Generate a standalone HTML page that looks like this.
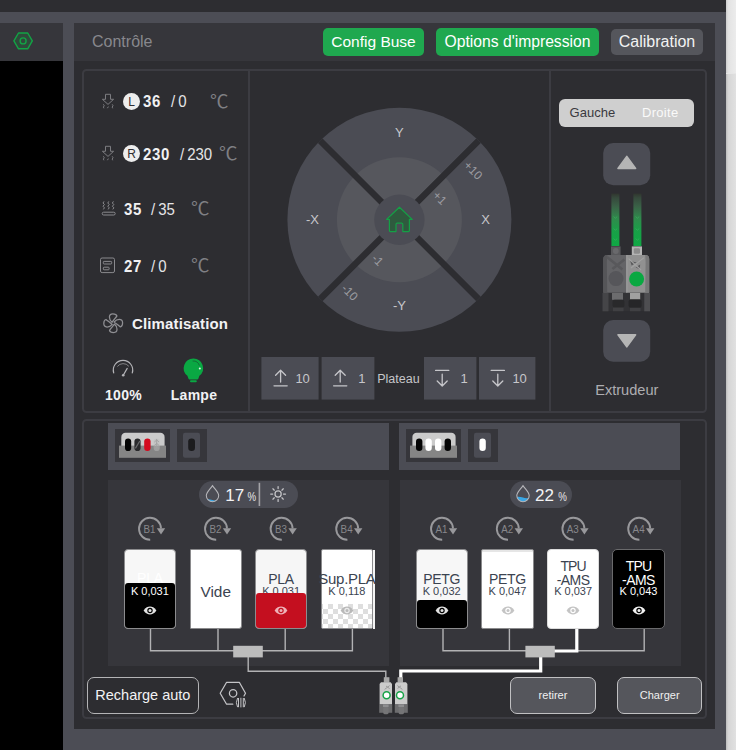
<!DOCTYPE html>
<html lang="fr">
<head>
<meta charset="utf-8">
<title>Contrôle</title>
<style>
*{box-sizing:border-box;margin:0;padding:0}
html,body{width:736px;height:750px;overflow:hidden}
body{background:#4c4d55;font-family:"Liberation Sans","Noto Sans CJK SC",sans-serif;position:relative;color:#e6e6e8}
.abs{position:absolute}
.t{position:absolute;white-space:nowrap;line-height:1}
.c{transform:translate(-50%,-50%)}
.cy{transform:translateY(-50%)}
#topbar{left:0;top:0;width:726px;height:12px;background:#2d2d31}
#rstrip{left:726px;top:0;width:10px;height:750px;background:linear-gradient(90deg,#cdcdcd 0,#e3e3e3 22%,#ececec 100%)}
#rstrip2{left:726px;top:73px;width:10px;height:677px;background:linear-gradient(90deg,#bcbcbc 0,#d6d6d6 22%,#e1e1e1 100%);border-top:1px solid #e6e6e6}
#lhead{left:0;top:23px;width:63px;height:38px;background:#36363b}
#lblack{left:0;top:61px;width:63px;height:689px;background:#000}
#main{left:74px;top:23px;width:641px;height:706px;background:#2d2d31}
#mhead{left:74px;top:23px;width:641px;height:38px;background:#36363b}
.box{border:2px solid #3c3c42;border-radius:4.5px}
.vline{width:2px;background:#3c3c42}
.btn{position:absolute;border-radius:5px;text-align:center;white-space:nowrap}
.green{background:#1fa84f;color:#fff}
</style>
</head>
<body>
<div class="abs" id="topbar"></div>
<div class="abs" id="rstrip"></div>
<div class="abs" id="rstrip2"></div>
<div class="abs" id="lhead"></div>
<div class="abs" id="lblack"></div>
<svg class="abs" style="left:10px;top:29px" width="26" height="24" viewBox="0 0 26 24"><path d="M3.9 11.9 L8.5 4 H17.7 L22.3 11.9 L17.7 19.8 H8.5 Z" fill="#2f4a3b" stroke="#12a445" stroke-width="1.4" stroke-linejoin="round"/><circle cx="13.1" cy="11.9" r="3" fill="none" stroke="#12a445" stroke-width="1.4"/></svg>

<div class="abs" id="main"></div>
<div class="abs" id="mhead"></div>
<div class="t cy" style="left:92px;top:42px;font-size:16px;color:#88888d">Contrôle</div>
<div class="btn green" style="left:323px;top:28px;width:101px;height:28px;font-size:15.5px;line-height:28px">Config Buse</div>
<div class="btn green" style="left:436px;top:28px;width:163px;height:28px;font-size:15.7px;line-height:28px">Options d'impression</div>
<div class="btn" style="left:611px;top:29px;width:92px;height:26px;font-size:16px;line-height:26px;background:#55565c;color:#f2f2f2">Calibration</div>

<!-- control box -->
<div class="abs box" style="left:82.2px;top:69.2px;width:624.4px;height:343.8px"></div>
<div class="abs vline" style="left:248px;top:71px;height:340.4px"></div>
<div class="abs vline" style="left:549px;top:71px;height:340.4px"></div>
<!-- AMS box -->
<div class="abs box" style="left:82.2px;top:418.8px;width:624.4px;height:299.8px"></div>

<!--TEMPS-->
<!-- temperature rows -->
<style>
.num{font-weight:bold;font-size:15px;color:#f0f0f2;letter-spacing:.6px;transform:translateY(-50%) scaleY(1.12)}
.tgt{font-size:15px;color:#e4e4e6;transform:translateY(-50%) scaleY(1.1)}
.deg{font-size:18.5px;color:#7f7f84;font-family:"Noto Sans CJK SC","Liberation Sans",sans-serif;font-weight:400;margin-top:-.6px}
.ico{position:absolute;overflow:visible}
.badge{position:absolute;width:17px;height:17px;border-radius:50%;background:#ededed;color:#2d2d31;font-size:12px;line-height:18.5px;text-align:center}
</style>
<svg class="ico" style="left:100px;top:92px" width="16" height="18" viewBox="0 0 16 18" fill="none" stroke="#7c7c80" stroke-width="1"><path d="M5.5 2.3 H10.5 V7.3 H13.6 L8 12.4 L2.4 7.3 H5.5 Z" stroke-linejoin="round"/><path d="M3.4 12.3 l.8 1.4 -.8 1.4 .5 1.2 M12.2 12.3 l.8 1.4 -.8 1.4 .5 1.2 M8.4 14.6 l-1 1.6"/></svg>
<div class="badge" style="left:123px;top:93px">L</div>
<div class="t cy num" style="left:143px;top:101px">36</div>
<div class="t cy tgt" style="left:171px;top:101px">/&#8201;0</div>
<div class="t cy deg" style="left:210px;top:101px">℃</div>

<svg class="ico" style="left:100px;top:144px" width="16" height="18" viewBox="0 0 16 18" fill="none" stroke="#7c7c80" stroke-width="1"><path d="M5.5 2.3 H10.5 V7.3 H13.6 L8 12.4 L2.4 7.3 H5.5 Z" stroke-linejoin="round"/><path d="M3.4 12.3 l.8 1.4 -.8 1.4 .5 1.2 M12.2 12.3 l.8 1.4 -.8 1.4 .5 1.2 M8.4 14.6 l-1 1.6"/></svg>
<div class="badge" style="left:123px;top:145px">R</div>
<div class="t cy num" style="left:143px;top:154px">230</div>
<div class="t cy tgt" style="left:180px;top:154px">/&#8201;230</div>
<div class="t cy deg" style="left:219px;top:153px">℃</div>

<svg class="ico" style="left:100px;top:199px" width="18" height="18" viewBox="0 0 18 18" fill="none" stroke="#8a8a8e" stroke-width="1"><path d="M4 2.4 l-1 1.6 1.4 1.6 -1.4 1.6 1.4 1.6 -1 1.6 M8.8 2.4 l-1 1.6 1.4 1.6 -1.4 1.6 1.4 1.6 -1 1.6 M13.4 2.4 l-1 1.6 1.4 1.6 -1.4 1.6 1.4 1.6 -1 1.6"/><rect x="2.2" y="13.2" width="13" height="2.8" rx="1.4"/></svg>
<div class="t cy num" style="left:124px;top:209.2px">35</div>
<div class="t cy tgt" style="left:151px;top:209.2px">/&#8201;35</div>
<div class="t cy deg" style="left:191px;top:208px">℃</div>

<svg class="ico" style="left:99px;top:257px" width="18" height="18" viewBox="0 0 18 18" fill="none" stroke="#8a8a8e" stroke-width="1"><rect x="1.5" y="1" width="14" height="14.6" rx="1.6"/><rect x="4.3" y="4.4" width="8.4" height="2.6" rx=".8"/><rect x="4.3" y="10.2" width="5.8" height="2.6" rx=".8"/></svg>
<div class="t cy num" style="left:124px;top:265.8px">27</div>
<div class="t cy tgt" style="left:151px;top:265.8px">/&#8201;0</div>
<div class="t cy deg" style="left:191px;top:265px">℃</div>

<!-- fan -->
<svg class="ico" style="left:101.8px;top:311.8px" width="23" height="23" viewBox="-11.2 -11.2 23 23" fill="none" stroke="#8f8f93" stroke-width="1.25" stroke-linejoin="round"><g id="bl"><path d="M-1.2 -0.9 C-4.4 -3.6 -5.2 -9.3 -0.4 -9.4 C1.8 -9.4 3.4 -8.6 3.7 -7.2 C2 -5 0.4 -3 -1.2 -0.9 Z"/></g><use href="#bl" transform="rotate(90)"/><use href="#bl" transform="rotate(180)"/><use href="#bl" transform="rotate(270)"/></svg>
<div class="t cy" style="left:132px;top:322.6px;font-size:15px;font-weight:bold;color:#f2f2f4;letter-spacing:.15px">Climatisation</div>

<!-- gauge -->
<svg class="ico" style="left:110px;top:358px" width="26" height="20" viewBox="0 0 26 20" fill="none" stroke="#b4b4b8" stroke-width="1.2" stroke-linecap="round"><path d="M3.7 14.8 A9.7 9.7 0 1 1 22.3 14.8"/><path d="M7.6 8.2 A7 7 0 0 1 18.6 8" stroke-width=".9" opacity=".7"/><path d="M13.4 17 L17.2 10.4"/><circle cx="13.2" cy="17.2" r="1.3" fill="#b4b4b8" stroke="none"/></svg>
<div class="t c" style="left:123.5px;top:394.6px;font-size:14px;font-weight:bold;color:#f2f2f4;letter-spacing:.3px">100%</div>

<!-- lamp -->
<svg class="ico" style="left:182px;top:357px" width="24" height="27" viewBox="182 357 24 27"><path d="M193.4 358.5 A9.7 9.7 0 0 0 187.4 375.8 L188.4 378.4 Q188.6 379.4 189.6 379.4 H197.2 Q198.2 379.4 198.4 378.4 L199.4 375.8 A9.7 9.7 0 0 0 193.4 358.5 Z" fill="#0aa843"/><rect x="190" y="380.2" width="6.8" height="2" rx="1" fill="#0aa843"/><circle cx="199.8" cy="368.4" r="1" fill="#e6f7ec"/><path d="M192.6 361 A6.6 6.6 0 0 1 199.4 365.6" stroke="#1d3326" stroke-width=".9" fill="none" opacity=".55"/></svg>
<div class="t c" style="left:194px;top:394.6px;font-size:14px;font-weight:bold;color:#f2f2f4;letter-spacing:.3px">Lampe</div>
<!--/TEMPS-->
<!--JOG-->
<svg class="abs" style="left:249px;top:71px" width="301" height="340" viewBox="249 71 301 340" font-family="Liberation Sans, sans-serif">
<defs><clipPath id="jc"><circle cx="399.4" cy="219.8" r="112"/></clipPath></defs>
<circle cx="399.4" cy="219.8" r="112" fill="#4b4c54"/>
<circle cx="399.4" cy="219.8" r="62.5" fill="#56575d"/>
<g clip-path="url(#jc)" stroke="#2d2d31" stroke-width="6.4"><path d="M310 130.4 L488.8 309.2 M488.8 130.4 L310 309.2"/></g>
<circle cx="399.4" cy="219.8" r="25.2" fill="#4b4c54"/>
<path d="M399.4 207.2 L386.6 219.4 H389.4 V230.6 a1 1 0 0 0 1 1 H396 V224.4 a1.2 1.2 0 0 1 1.2 -1.2 H401.6 a1.2 1.2 0 0 1 1.2 1.2 V231.6 H408.4 a1 1 0 0 0 1 -1 V219.4 H412.2 Z" fill="#2f5a3e" stroke="#14a046" stroke-width="1.2" stroke-linejoin="round"/>
<g fill="#c6c6ca" font-size="13" text-anchor="middle">
<text x="399.4" y="136.6">Y</text>
<text x="312.4" y="223.8">-X</text>
<text x="485.6" y="223.8">X</text>
<text x="399.4" y="310">-Y</text>
</g>
<g fill="#9c9ca1" font-size="12" text-anchor="middle">
<text transform="translate(473 170.4) rotate(45)" y="4">+10</text>
<text transform="translate(439.6 198) rotate(45)" y="4">+1</text>
<text transform="translate(377.6 260.2) rotate(45)" y="4">-1</text>
<text transform="translate(349.6 292.6) rotate(45)" y="4">-10</text>
</g>
<!-- bed buttons -->
<g fill="#4b4c54"><rect x="261.4" y="357" width="57.2" height="42.6"/><rect x="321.6" y="357" width="52.8" height="42.6"/><rect x="424" y="357" width="52.4" height="42.6"/><rect x="479" y="357" width="56.4" height="42.6"/></g>
<g fill="none" stroke="#c6c6ca" stroke-width="1.3" stroke-linecap="round" stroke-linejoin="round">
<path id="upa" d="M274 385.8 H287.2 M280.6 382 V370.4 M275.6 375.2 L280.6 370.2 L285.6 375.2"/>
<use href="#upa" x="59.6"/>
<path id="dna" d="M435.6 370.4 H448.8 M442.2 374.2 V385.8 M437.2 381 L442.2 386 L447.2 381"/>
<use href="#dna" x="55.6"/>
</g>
<g fill="#c6c6ca" font-size="13">
<text x="295.4" y="383">10</text>
<text x="358.2" y="383">1</text>
<text x="460.6" y="383">1</text>
<text x="512.4" y="383">10</text>
<text x="377.2" y="382.8" font-size="12.5">Plateau</text>
</g>
</svg>
<!--/JOG-->
<!--EXTRUDER-->
<div class="abs" style="left:559px;top:98.5px;width:134.5px;height:28.5px;border-radius:6px;background:#cfcfcf"></div>
<div class="t c" style="left:592.4px;top:111.6px;font-size:13px;color:#3a3a40">Gauche</div>
<div class="t c" style="left:660.2px;top:111.6px;font-size:13px;letter-spacing:.3px;color:#fafafa">Droite</div>
<svg class="abs" style="left:551px;top:130px" width="155" height="280" viewBox="551 130 155 280" font-family="Liberation Sans, sans-serif">
<defs>
<linearGradient id="tg" x1="0" y1="0" x2="0" y2="1"><stop offset="0" stop-color="#30362f"/><stop offset=".08" stop-color="#36493c"/><stop offset=".25" stop-color="#3a6247"/><stop offset=".48" stop-color="#2f8b4c"/><stop offset=".72" stop-color="#18a047"/><stop offset="1" stop-color="#0fa844"/></linearGradient>
</defs>
<rect x="603.2" y="143" width="47" height="42.2" rx="10" fill="#4b4c54"/>
<path d="M626.8 156.4 L635.6 168.4 H618 Z" fill="#b5b5b5" stroke="#b5b5b5" stroke-width="1.6" stroke-linejoin="round"/>
<rect x="603.2" y="320" width="47" height="41.8" rx="10" fill="#4b4c54"/>
<path d="M626.8 346.8 L635.6 334.8 H618 Z" fill="#b5b5b5" stroke="#b5b5b5" stroke-width="1.6" stroke-linejoin="round"/>
<!-- tubes -->
<rect x="611.4" y="193.6" width="8" height="52.4" fill="url(#tg)"/>
<rect x="633.4" y="193.6" width="8" height="52.4" fill="url(#tg)"/>
<g fill="none" stroke="#3fae63" stroke-width=".8" opacity=".8"><path d="M613.6 216.6 l1.8 1.6 1.8 -1.6 M613.6 228.6 l1.8 1.6 1.8 -1.6 M613.6 238.6 l1.8 1.6 1.8 -1.6"/><path d="M635.6 216.6 l1.8 1.6 1.8 -1.6 M635.6 228.6 l1.8 1.6 1.8 -1.6 M635.6 238.6 l1.8 1.6 1.8 -1.6"/></g>
<!-- connectors -->
<rect x="611" y="246.4" width="9.6" height="9" fill="#59595c"/><circle cx="615.8" cy="251" r="2.9" fill="#69696c"/>
<rect x="631.8" y="246.4" width="10.2" height="9" fill="#b4b4b4"/><rect x="633.8" y="248.2" width="6.2" height="5.6" rx="1.4" fill="#8c8c8c"/>
<!-- feet area -->
<rect x="608" y="293" width="36" height="18" fill="#323235"/>
<rect x="602.5" y="293" width="6" height="18.3" fill="#454548"/>
<rect x="644.2" y="293" width="5.8" height="18.3" fill="#4e4e51"/>
<rect x="612" y="293" width="11" height="6.8" fill="#6c6c6e"/>
<rect x="612.6" y="299.8" width="11.8" height="7.8" rx="2" fill="#29292b"/>
<rect x="630" y="293" width="10.2" height="6.4" fill="#a0a0a0"/>
<rect x="628.6" y="299.6" width="13" height="8.2" rx="2" fill="#262628"/>
<rect x="613" y="307.6" width="10.6" height="3.6" fill="#404043"/><rect x="630" y="307.8" width="10.6" height="3.4" fill="#404043"/>
<!-- body -->
<path d="M607.4 255 H626.7 V292.8 H603.3 V259 Q603.3 255 607.4 255 Z" fill="#646467"/>
<path d="M626.7 255 H645.2 Q649.2 255 649.2 259 V292.8 H626.7 Z" fill="#919191"/>
<path d="M607.4 255 Q603.3 255 603.3 259 V292.8 H607.2 L606.8 262 Z" fill="#555558"/>
<path d="M645.2 255 Q649.2 255 649.2 259 V292.8 H645.2 L645.6 262 Z" fill="#777778"/>
<path d="M607 257 L622.4 269.6 M624.4 259.6 L612.4 269" stroke="#58585b" stroke-width="2.6" fill="none"/>
<path d="M630.2 261 L636.6 262.4 L631.6 265.6 Z M640.2 264.4 L639.6 269.4 L635.6 267.2 Z" fill="#5a5a5c"/>
<path d="M628.6 258.6 L641 270 M644 257.6 L631 268" stroke="#a2a2a2" stroke-width="1.2" fill="none"/>
<rect x="626.3" y="255" width=".9" height="37.8" fill="#aaaaaa"/>
<circle cx="616" cy="278.6" r="7.5" fill="#56565a"/>
<circle cx="636.6" cy="279" r="7.5" fill="#09a841"/>
<text x="626.8" y="395.4" font-size="14.6" fill="#adadb1" text-anchor="middle">Extrudeur</text>
</svg>
<!--/EXTRUDER-->
<!--AMS-->
<style>
.strip{position:absolute;background:#4b4c54;top:423px;height:46.5px}
.pan{position:absolute;background:#36363b;top:480.4px;height:185.2px}
.ibox{position:absolute;background:#36363b;top:428.5px;height:33.7px}
.pill{position:absolute;background:#4b4c54;border-radius:14px;top:480.5px;height:27.7px}
.slot{position:absolute;top:548.6px;height:80.6px;width:52.2px;border:1px solid #8c8c8e;border-radius:4px;overflow:hidden;background:#f7f7f7}
.slot .fill{position:absolute;left:0;right:0;bottom:0;border-radius:3px 3px 0 0}
.mat{position:absolute;left:50%;transform:translate(-50%,-50%);white-space:nowrap;font-size:14px;line-height:1;color:#3b4350;letter-spacing:-.3px}
.kv{position:absolute;left:50%;transform:translate(-50%,-50%);white-space:nowrap;font-size:11px;line-height:1;color:#3b4350;top:41.6px}
.obtn{position:absolute;top:677.4px;height:36.4px;border:1.2px solid #c0c0c2;border-radius:7px;background:#55565c;color:#f0f0f0;font-size:11px;text-align:center;line-height:34px}
</style>
<!-- left AMS header -->
<div class="strip" style="left:108.3px;width:280.7px"></div>
<div class="ibox" style="left:114.8px;width:55.2px"></div>
<div class="ibox" style="left:177px;width:29.6px"></div>
<svg class="abs" style="left:114px;top:428px" width="94" height="35" viewBox="114 428 94 35">
<path d="M121.3 446.4 V437 a4.2 4.2 0 0 1 4.2 -4.2 H160.4 a4.2 4.2 0 0 1 4.2 4.2 V446.4 Z" fill="#cbcbcb"/>
<rect x="119" y="445.6" width="47" height="12.2" fill="#858585"/>
<rect x="125" y="438.4" width="6.2" height="12.6" rx="3.1" fill="#050505"/>
<rect x="134.4" y="438.4" width="6.2" height="12.6" rx="3.1" fill="#2a2a2c"/><path d="M135.4 448.4 L139.8 441" stroke="#6a6a6c" stroke-width="1.2"/>
<rect x="144.2" y="438.4" width="6.4" height="12.6" rx="3.2" fill="#d40a1e"/>
<rect x="153.6" y="438.4" width="6.2" height="12.6" rx="3.1" fill="#bdbdbd" opacity=".45"/><path d="M156.7 439 V450.6 M154.4 442 l2.3 -2 2.3 2 M154.4 445.4 l2.3 -2 2.3 2 M154.6 449 l2.1 -2 2.1 2" stroke="#a2a2a2" stroke-width=".9" fill="none"/>
<rect x="183" y="432.8" width="17" height="25" rx="2" fill="#4b4c54"/>
<rect x="188.2" y="438.4" width="6.8" height="12.6" rx="3.2" fill="#1c1c1e"/>
</svg>
<!-- right AMS header -->
<div class="strip" style="left:399px;width:281px"></div>
<div class="ibox" style="left:405.9px;width:55px"></div>
<div class="ibox" style="left:468.3px;width:29.4px"></div>
<svg class="abs" style="left:405px;top:428px" width="94" height="35" viewBox="405 428 94 35">
<path d="M412.4 446.4 V437 a4.2 4.2 0 0 1 4.2 -4.2 H451.4 a4.2 4.2 0 0 1 4.2 4.2 V446.4 Z" fill="#cbcbcb"/>
<rect x="410" y="445.6" width="47" height="12.2" fill="#858585"/>
<rect x="416" y="438.4" width="6.4" height="12.6" rx="3.2" fill="#050505"/>
<rect x="425.4" y="438.4" width="6.4" height="12.6" rx="3.2" fill="#ffffff"/>
<rect x="435" y="438.4" width="6.4" height="12.6" rx="3.2" fill="#ffffff"/>
<rect x="444.6" y="438.4" width="6.4" height="12.6" rx="3.2" fill="#050505"/>
<rect x="474" y="432.8" width="17" height="25" rx="2" fill="#4b4c54"/>
<rect x="479.4" y="438.4" width="6.4" height="12.6" rx="3.2" fill="#ffffff"/>
</svg>
<!-- panels -->
<div class="pan" style="left:108.3px;width:280.7px"></div>
<div class="pan" style="left:400px;width:281.4px"></div>
<!--AMSBODY-->
<div class="pill" style="left:199.2px;width:98.8px"></div>
<div class="pill" style="left:509.8px;width:62px"></div>
<svg class="abs" style="left:199px;top:480px" width="375" height="30" viewBox="199 480 375 30" font-family="Liberation Sans, sans-serif">
<defs><clipPath id="dl"><path d="M204 499.8 Q208 498.8 212.5 500 T221 499.6 V506 H204 Z"/></clipPath><clipPath id="dr"><path d="M515 497.2 Q519 496 523 497.6 T531 497 V506 H515 Z"/></clipPath>
<path id="drop" d="M0 -8.4 C2.6 -4.6 6.2 -1.6 6.2 1.6 A6.2 6.2 0 0 1 -6.2 1.6 C-6.2 -1.6 -2.6 -4.6 0 -8.4 Z"/></defs>
<g clip-path="url(#dl)"><use href="#drop" x="212.5" y="494" fill="#3aa6e4"/></g>
<use href="#drop" x="212.5" y="494" fill="none" stroke="#b6b6ba" stroke-width="1.05"/>
<text x="225.2" y="501" font-size="17" fill="#f3f3f5">17</text>
<text x="247.4" y="500.6" font-size="12" fill="#e8e8ea" textLength="8.6" lengthAdjust="spacingAndGlyphs">%</text>
<rect x="258.6" y="482.8" width="1.6" height="23.2" fill="#a4a4a7"/>
<g stroke="#c4c4c7" stroke-width="1.25" fill="none" stroke-linecap="round" transform="translate(278.1 494)"><circle r="3.1"/><path d="M0 -7.4v2M0 5.4v2M-7.4 0h2M5.4 0h2M-5.2 -5.2l1.4 1.4M3.8 3.8l1.4 1.4M-5.2 5.2l1.4 -1.4M3.8 -3.8l1.4 -1.4"/></g>
<g clip-path="url(#dr)"><use href="#drop" x="523" y="494" fill="#3aa6e4"/></g>
<use href="#drop" x="523" y="494" fill="none" stroke="#b6b6ba" stroke-width="1.05"/>
<text x="535" y="501" font-size="17" fill="#f3f3f5">22</text>
<text x="558.2" y="500.6" font-size="12" fill="#e8e8ea" textLength="8.6" lengthAdjust="spacingAndGlyphs">%</text>
</svg>
<svg class="abs" style="left:108px;top:512px" width="574" height="34" viewBox="108 512 574 34" font-family="Liberation Sans, sans-serif">
<g transform="translate(150 528.8)"><path d="M11 -0.4 A11 11 0 1 0 0.2 11" fill="none" stroke="#98989b" stroke-width="1.9"/><path d="M6.8 -0.6 H15.2 L11 5.6 Z" fill="#98989b"/><text x="-0.6" y="4.2" font-size="11.5" fill="#88888c" text-anchor="middle" textLength="12" lengthAdjust="spacingAndGlyphs">B1</text></g>
<g transform="translate(216 528.8)"><path d="M11 -0.4 A11 11 0 1 0 0.2 11" fill="none" stroke="#98989b" stroke-width="1.9"/><path d="M6.8 -0.6 H15.2 L11 5.6 Z" fill="#98989b"/><text x="-0.6" y="4.2" font-size="11.5" fill="#88888c" text-anchor="middle" textLength="12" lengthAdjust="spacingAndGlyphs">B2</text></g>
<g transform="translate(281.6 528.8)"><path d="M11 -0.4 A11 11 0 1 0 0.2 11" fill="none" stroke="#98989b" stroke-width="1.9"/><path d="M6.8 -0.6 H15.2 L11 5.6 Z" fill="#98989b"/><text x="-0.6" y="4.2" font-size="11.5" fill="#88888c" text-anchor="middle" textLength="12" lengthAdjust="spacingAndGlyphs">B3</text></g>
<g transform="translate(347.2 528.8)"><path d="M11 -0.4 A11 11 0 1 0 0.2 11" fill="none" stroke="#98989b" stroke-width="1.9"/><path d="M6.8 -0.6 H15.2 L11 5.6 Z" fill="#98989b"/><text x="-0.6" y="4.2" font-size="11.5" fill="#88888c" text-anchor="middle" textLength="12" lengthAdjust="spacingAndGlyphs">B4</text></g>
<g transform="translate(442 528.8)"><path d="M11 -0.4 A11 11 0 1 0 0.2 11" fill="none" stroke="#98989b" stroke-width="1.9"/><path d="M6.8 -0.6 H15.2 L11 5.6 Z" fill="#98989b"/><text x="-0.6" y="4.2" font-size="11.5" fill="#88888c" text-anchor="middle" textLength="12" lengthAdjust="spacingAndGlyphs">A1</text></g>
<g transform="translate(507.8 528.8)"><path d="M11 -0.4 A11 11 0 1 0 0.2 11" fill="none" stroke="#98989b" stroke-width="1.9"/><path d="M6.8 -0.6 H15.2 L11 5.6 Z" fill="#98989b"/><text x="-0.6" y="4.2" font-size="11.5" fill="#88888c" text-anchor="middle" textLength="12" lengthAdjust="spacingAndGlyphs">A2</text></g>
<g transform="translate(573.4 528.8)"><path d="M11 -0.4 A11 11 0 1 0 0.2 11" fill="none" stroke="#98989b" stroke-width="1.9"/><path d="M6.8 -0.6 H15.2 L11 5.6 Z" fill="#98989b"/><text x="-0.6" y="4.2" font-size="11.5" fill="#88888c" text-anchor="middle" textLength="12" lengthAdjust="spacingAndGlyphs">A3</text></g>
<g transform="translate(639.2 528.8)"><path d="M11 -0.4 A11 11 0 1 0 0.2 11" fill="none" stroke="#98989b" stroke-width="1.9"/><path d="M6.8 -0.6 H15.2 L11 5.6 Z" fill="#98989b"/><text x="-0.6" y="4.2" font-size="11.5" fill="#88888c" text-anchor="middle" textLength="12" lengthAdjust="spacingAndGlyphs">A4</text></g>
</svg>
<svg class="abs" style="left:108px;top:625px" width="580" height="95" viewBox="108 625 580 95" fill="none">
<g stroke="#b2b2b4" stroke-width="1.4"><path d="M150.5 628 V650.8 H352.4 V628 M218 628 V650.8 M285.2 628 V650.8"/>
<path d="M248.2 657 V671.2 H385.8 V678"/>
<path d="M443 628 V650.8 H644.2 V628 M509.4 628 V650.8"/></g>
<g stroke="#ffffff" stroke-width="3.2"><path d="M576.8 628 V651 H553"/><path d="M540.7 656 V671 H400.8 V678"/></g>
<rect x="233.2" y="645.8" width="29.6" height="11.6" fill="#bcbcbc"/>
<rect x="525.4" y="645.8" width="29.4" height="11.6" fill="#bcbcbc"/>
</svg>
<div class="slot" style="left:123.8px;background:#f7f7f7;"><div class="mat" style="top:28.6px;color:#ffffff;">PLA</div><div class="fill" style="top:33.4px;background:#000"></div><div class="kv" style="color:#ffffff">K 0,031</div><svg class="abs" style="left:18.2px;top:56.2px" width="14" height="9" viewBox="0 0 14 9"><path d="M.6 4.5 C2.6 1.4 4.8 .6 7 .6 S11.4 1.4 13.4 4.5 C11.4 7.6 9.2 8.4 7 8.4 S2.6 7.6 .6 4.5 Z" fill="#e2e2e2"/><circle cx="7" cy="4.5" r="2.7" fill="#000"/><circle cx="7" cy="4.5" r="1.5" fill="#e2e2e2"/></svg></div>
<div class="slot" style="left:189.6px;background:#ffffff;border-radius:1px 3px 3px 1px;border-color:#8a8a8c"><div class="mat" style="top:42.6px;color:#3b4350;font-size:15.4px;letter-spacing:0">Vide</div></div>
<div class="slot" style="left:255px;background:#f6f6f6;"><div class="mat" style="top:29.8px;color:#3b4350;">PLA</div><div class="kv" style="color:#3b4350">K 0,031</div><div class="fill" style="top:43.6px;background:#c40f1f"></div><svg class="abs" style="left:18.2px;top:56.2px" width="14" height="9" viewBox="0 0 14 9"><path d="M.6 4.5 C2.6 1.4 4.8 .6 7 .6 S11.4 1.4 13.4 4.5 C11.4 7.6 9.2 8.4 7 8.4 S2.6 7.6 .6 4.5 Z" fill="#eeb2b8"/><circle cx="7" cy="4.5" r="2.7" fill="#c40f1f"/><circle cx="7" cy="4.5" r="1.5" fill="#eeb2b8"/></svg></div>
<div class="abs" style="left:373px;top:550px;width:1.8px;height:78.8px;background:#f4f4f4"></div>
<div class="slot" style="left:320.8px;background:#ffffff;overflow:visible;border-radius:2px;border-color:#8a8a8c"><div class="fill" style="top:54.6px;background-color:#fff;background-image:linear-gradient(45deg,#dedede 25%,transparent 25%,transparent 75%,#dedede 75%),linear-gradient(45deg,#dedede 25%,transparent 25%,transparent 75%,#dedede 75%);background-size:10px 10px;background-position:1px 0,6px 5px;border-radius:0"></div><div class="kv" style="color:#3b4350">K 0,118</div><div class="mat" style="top:28.8px;font-size:15px">Sup.PLA</div><svg class="abs" style="left:18.2px;top:56.2px" width="14" height="9" viewBox="0 0 14 9"><path d="M.6 4.5 C2.6 1.4 4.8 .6 7 .6 S11.4 1.4 13.4 4.5 C11.4 7.6 9.2 8.4 7 8.4 S2.6 7.6 .6 4.5 Z" fill="#b9b9b9"/><circle cx="7" cy="4.5" r="2.7" fill="#ececec"/><circle cx="7" cy="4.5" r="1.5" fill="#b9b9b9"/></svg></div>
<div class="slot" style="left:415.6px;background:#f7f7f7;"><div class="mat" style="top:29.8px;color:#3b4350;">PETG</div><div class="fill" style="top:50px;background:#000"></div><div class="kv" style="color:#3b4350">K 0,032</div><svg class="abs" style="left:18.2px;top:56.2px" width="14" height="9" viewBox="0 0 14 9"><path d="M.6 4.5 C2.6 1.4 4.8 .6 7 .6 S11.4 1.4 13.4 4.5 C11.4 7.6 9.2 8.4 7 8.4 S2.6 7.6 .6 4.5 Z" fill="#e2e2e2"/><circle cx="7" cy="4.5" r="2.7" fill="#000"/><circle cx="7" cy="4.5" r="1.5" fill="#e2e2e2"/></svg></div>
<div class="slot" style="left:481.4px;background:#ffffff;border-color:#8a8a8c;border-radius:2px;box-shadow:inset 0 2px 0 #e6e6e6"><div class="mat" style="top:29.8px;color:#3b4350;">PETG</div><div class="kv" style="color:#3b4350">K 0,047</div><svg class="abs" style="left:18.2px;top:56.2px" width="14" height="9" viewBox="0 0 14 9"><path d="M.6 4.5 C2.6 1.4 4.8 .6 7 .6 S11.4 1.4 13.4 4.5 C11.4 7.6 9.2 8.4 7 8.4 S2.6 7.6 .6 4.5 Z" fill="#c4c4c4"/><circle cx="7" cy="4.5" r="2.7" fill="#fff"/><circle cx="7" cy="4.5" r="1.5" fill="#c4c4c4"/></svg></div>
<div class="slot" style="left:547px;background:#ffffff;border-color:#dcdcdc"><div class="mat" style="top:16.4px;color:#3b4350;letter-spacing:-.9px">TPU</div><div class="mat" style="top:30px;color:#3b4350;letter-spacing:-.55px">-AMS</div><div class="kv" style="color:#3b4350">K 0,037</div><svg class="abs" style="left:18.2px;top:56.2px" width="14" height="9" viewBox="0 0 14 9"><path d="M.6 4.5 C2.6 1.4 4.8 .6 7 .6 S11.4 1.4 13.4 4.5 C11.4 7.6 9.2 8.4 7 8.4 S2.6 7.6 .6 4.5 Z" fill="#c4c4c4"/><circle cx="7" cy="4.5" r="2.7" fill="#fff"/><circle cx="7" cy="4.5" r="1.5" fill="#c4c4c4"/></svg></div>
<div class="slot" style="left:612.4px;background:#000000;border-color:#6a6a6c;border-radius:5px"><div class="mat" style="top:16.4px;color:#ffffff;letter-spacing:-.9px">TPU</div><div class="mat" style="top:30px;color:#ffffff;letter-spacing:-.55px">-AMS</div><div class="kv" style="color:#ffffff">K 0,043</div><svg class="abs" style="left:18.2px;top:56.2px" width="14" height="9" viewBox="0 0 14 9"><path d="M.6 4.5 C2.6 1.4 4.8 .6 7 .6 S11.4 1.4 13.4 4.5 C11.4 7.6 9.2 8.4 7 8.4 S2.6 7.6 .6 4.5 Z" fill="#f2f2f2"/><circle cx="7" cy="4.5" r="2.7" fill="#000"/><circle cx="7" cy="4.5" r="1.5" fill="#f2f2f2"/></svg></div>
<div class="obtn" style="left:87.2px;width:111.4px;background:#2d2d31;font-size:14.5px;color:#f2f2f4;border-color:#b4b4b6">Recharge auto</div>
<div class="obtn" style="left:510.4px;width:85.2px">retirer</div>
<div class="obtn" style="left:617.4px;width:84.6px">Charger</div>
<svg class="abs" style="left:218px;top:680px" width="32" height="30" viewBox="218 680 32 30" fill="none" stroke="#c4c4c7" stroke-width="1.25" stroke-linejoin="round" stroke-linecap="round"><path d="M232.8 704.2 H226.6 L220.2 693.3 L226.6 682.3 H239.3 L245.5 693.3 L244 696"/><circle cx="233.1" cy="693.3" r="3.7"/><g stroke-width="1"><path d="M238.5 698.4 V706.8 M240.9 698.2 V707 M243.3 698.4 V706.8"/><path d="M237.4 698.4 Q235.2 702.6 237.4 706.8 M244.4 698.4 Q246.6 702.6 244.4 706.8"/></g></svg>
<svg class="abs" style="left:376px;top:676px" width="36" height="40" viewBox="376 676 36 40">
<rect x="383.8" y="677.2" width="5.6" height="5.4" fill="#a8a8a8"/><rect x="397.6" y="677.2" width="5.4" height="5.4" fill="#a8a8a8"/>
<path d="M381 682.2 H390.6 L392 684 V704.4 H379.6 V684 Z" fill="#cbcbcb"/><path d="M396.4 682.2 H406 L407.4 684 V704.4 H395 V684 Z" fill="#cbcbcb"/>
<path d="M384.6 689.4 L389.6 685.6 M386 686 l3.6 2.6" stroke="#9a9a9a" stroke-width="1"/><path d="M397.4 685.6 L402.4 689.4 M397.6 688.4 l3.4 -2.6" stroke="#9a9a9a" stroke-width="1"/>
<circle cx="386.6" cy="695.2" r="3.5" fill="#fff" stroke="#17a348" stroke-width="1.5"/><circle cx="400" cy="695.2" r="3.5" fill="#fff" stroke="#17a348" stroke-width="1.5"/>
<rect x="379.2" y="704.4" width="13" height="8.4" fill="#6d6d6f"/><rect x="383" y="704.4" width="5.6" height="2.6" fill="#8e8e90"/><rect x="383.2" y="707" width="5.4" height="7.2" rx="1.4" fill="#757577"/>
<rect x="394.8" y="704.4" width="13" height="8.4" fill="#6d6d6f"/><rect x="398.4" y="704.4" width="5.6" height="2.6" fill="#8e8e90"/><rect x="398.6" y="707" width="5.4" height="7.2" rx="1.4" fill="#757577"/>
</svg>
<!--/AMS-->
</body>
</html>
